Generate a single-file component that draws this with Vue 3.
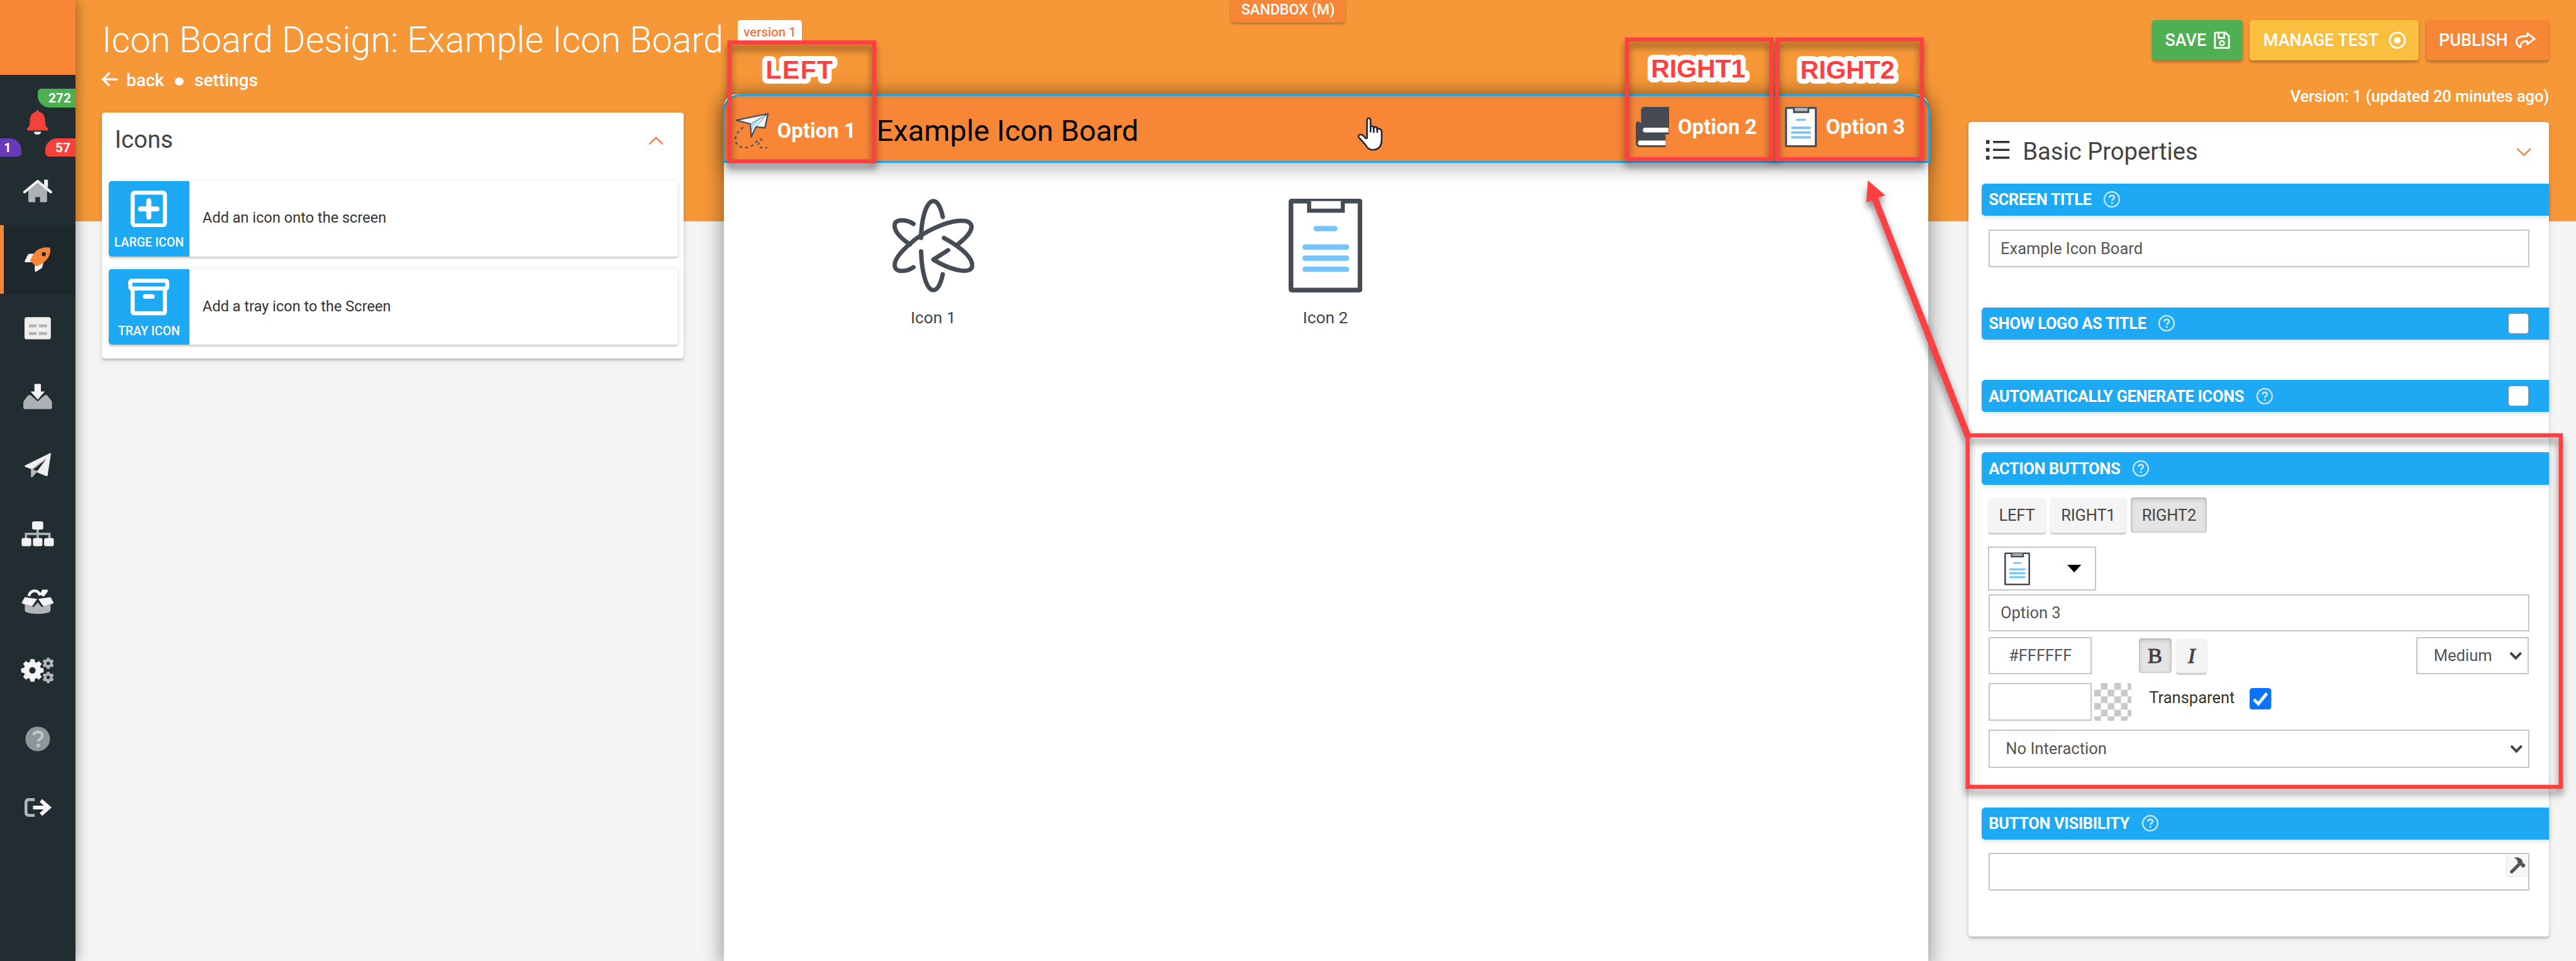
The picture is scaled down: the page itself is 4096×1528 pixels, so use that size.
<script setup>
const gear = (cx, cy, r, teeth, hole) => {
  const pts = []
  const step = (Math.PI * 2) / teeth
  for (let i = 0; i < teeth; i++) {
    const a = i * step - Math.PI / 2
    for (const [k, m] of [[-0.36, 0.76], [-0.2, 1], [0.2, 1], [0.36, 0.76]]) {
      const t = a + k * step
      pts.push(`${(cx + Math.cos(t) * r * m).toFixed(2)} ${(cy + Math.sin(t) * r * m).toFixed(2)}`)
    }
  }
  return `M${pts.join('L')}Z M${cx - hole} ${cy}a${hole} ${hole} 0 1 0 ${hole * 2} 0a${hole} ${hole} 0 1 0 ${-hole * 2} 0Z`
}

const palette = [
  { id: 'large', label: 'LARGE ICON', text: 'Add an icon onto the screen' },
  { id: 'tray', label: 'TRAY ICON', text: 'Add a tray icon to the Screen' },
]
const positions = ['LEFT', 'RIGHT1', 'RIGHT2']
</script>

<template>
  <div class="app">
    <svg class="defs" width="0" height="0">
      <symbol id="clipboard" viewBox="0 0 126 160">
        <rect x="4" y="4" width="118" height="152" rx="1" fill="#fff" stroke="#454c55" stroke-width="8" />
        <path d="M35 4V20.500H92.500V4" fill="var(--clip, #fff)" stroke="#454c55" stroke-width="7" />
        <path d="M47 51H79M28 82.500H99M28 101.500H99M28 120.500H99" stroke="#76c2fc" stroke-width="9" stroke-linecap="round" />
      </symbol>
      <symbol id="help" viewBox="0 0 30 30">
        <circle cx="15" cy="15" r="12.800" fill="none" stroke="#c4e7fd" stroke-width="2.600" />
        <path d="M11 12.200C11.300 9.600 13 8.500 15.200 8.500 17.500 8.500 19.200 9.900 19.200 12 19.200 14.700 15.300 14.600 15.300 17.600" fill="none" stroke="#c4e7fd" stroke-width="2.800" />
        <circle cx="15.300" cy="21.300" r="1.800" fill="#c4e7fd" />
      </symbol>
    </svg>

    <nav class="sidebar">
      <div class="logo"></div>
      <div class="alerts">
        <span class="badge green">272</span>
        <svg class="bell" viewBox="0 0 38 42">
          <path d="M19 0C21 0 21.500 1.500 21.500 3C29 5 32 11 32 18C32 26 34 29 37 31.500C38 33 37 35 35 35H3C1 35 0 33 1 31.500C4 29 6 26 6 18C6 11 9 5 16.500 3C16.500 1.500 17 0 19 0Z" fill="#f5413c" />
          <path d="M13 37H25C25 40 22.500 42 19 42S13 40 13 37Z" fill="#f2f2f2" />
        </svg>
        <span class="badge purple">1</span>
        <span class="badge red">57</span>
      </div>
      <div class="nav-item">
        <svg viewBox="0 0 60 60">
          <path d="M30 16L46 29V47Q46 49 44 49H34V40H26V49H16Q14 49 14 47V29Z" fill="#adb1b3" />
          <path d="M41 10.500H47.500V24L41 19Z" fill="#f4f4f4" />
          <path d="M7.500 31.500L30 13L52.500 31.500" fill="none" stroke="#f8f8f8" stroke-width="4.600" stroke-linecap="round" stroke-linejoin="round" />
        </svg>
      </div>
      <div class="nav-item active">
        <svg viewBox="0 0 60 60">
          <path d="M24 20H16Q14 20 13 22L8 32Q7 34.500 10 34.500H20ZM40 34L38 42Q38 44 36 45L28 50Q25 52 25 48V39Z" fill="#f2f2f2" />
          <path d="M51 9.500C53 17 50 26 43 32.500C38 37 33 39.500 28 41.500L17 32C19 27 22 20 27 15.500C33 10 43 7.500 51 9.500Z" fill="#f78637" />
          <circle cx="40.500" cy="20.500" r="3.600" fill="#1e282c" />
        </svg>
      </div>
      <div class="nav-item">
        <svg viewBox="0 0 60 60">
          <rect x="7.500" y="11" width="45" height="38" rx="4" fill="#efefef" />
          <path d="M15 26H28M32 26H46M15 39H28M32 39H46" stroke="#b3b5b6" stroke-width="5" />
        </svg>
      </div>
      <div class="nav-item">
        <svg viewBox="0 0 60 60">
          <path d="M14 27H18L29 37H31L42 27H46L53 36Q54.500 38 54.500 41V48Q54.500 51 51 51H9Q5.500 51 5.500 48V41Q5.500 38 7 36Z" fill="#adb1b3" />
          <path d="M24.500 8H35.500V21H42L30 35L18 21H24.500Z" fill="#f4f4f4" />
        </svg>
      </div>
      <div class="nav-item">
        <svg viewBox="0 0 60 60">
          <path d="M18.500 36L30 40L21 50Q19 52 18.500 48Z" fill="#b8bbbc" />
          <path d="M51 9Q53 8.500 52.500 11L47 47Q46.500 49 44 48L28 41.500L44 20L21 37L8.500 32.500Q7 31 8.500 30Z" fill="#efefef" />
          <path d="M44 19L21 37" stroke="#a9adaf" stroke-width="1.800" />
        </svg>
      </div>
      <div class="nav-item">
        <svg viewBox="0 0 60 60">
          <path d="M30 22V38M10 38V30H50V38" fill="none" stroke="#b0b3b5" stroke-width="4" />
          <g fill="#f2f2f2">
            <rect x="20.500" y="8.500" width="19" height="14" rx="3" />
            <rect x="2.500" y="37" width="16.500" height="14" rx="3" />
            <rect x="22" y="37" width="16" height="14" rx="3" />
            <rect x="41" y="37" width="16.500" height="14" rx="3" />
          </g>
        </svg>
      </div>
      <div class="nav-item">
        <svg viewBox="0 0 60 60">
          <path d="M8 34L23 39L30 31L37 39L52 34V44Q52 47 49 48C38 51.500 22 51.500 11 48Q8 47 8 44Z" fill="#b3b6b8" />
          <path d="M15 20C17 9 31 8 34 19M38 20L45 11" fill="none" stroke="#f4f4f4" stroke-width="5" />
          <path d="M33 18H43L47 12V9H38" fill="#f4f4f4" />
          <path d="M8 22L29 25L21 37Q20 38 18 37L4 33Q2 32 3 31ZM52 22L31 25L39 37Q40 38 42 37L56 33Q58 32 57 31Z" fill="#f4f4f4" />
        </svg>
      </div>
      <div class="nav-item">
        <svg viewBox="0 0 60 60" fill-rule="evenodd">
          <path :d="gear(21, 30, 19, 8, 6)" fill="#f4f4f4" stroke="#f4f4f4" stroke-width="1" stroke-linejoin="round" />
          <path :d="gear(48, 18, 10, 6, 3)" fill="#b3b6b8" />
          <path :d="gear(48, 42, 10, 6, 3)" fill="#b3b6b8" />
        </svg>
      </div>
      <div class="nav-item">
        <svg viewBox="0 0 60 60">
          <circle cx="30" cy="30" r="21" fill="#8f9698" />
          <path d="M22.500 23.500C24.500 19.500 27 18 30.500 18C35 18 38 20.500 38 24.500C38 30 31 29.500 31 34.500" fill="none" stroke="#c3c6c7" stroke-width="4.600" />
          <circle cx="31" cy="41" r="3" fill="#c3c6c7" />
        </svg>
      </div>
      <div class="nav-item">
        <svg viewBox="0 0 60 60">
          <path d="M25 16.500H15Q10 16.500 10 22V38Q10 43.500 15 43.500H25" fill="none" stroke="#b3b6b8" stroke-width="5" />
          <path d="M22 30H49M35.500 18L49 30L35.500 42" fill="none" stroke="#f6f6f6" stroke-width="6.400" />
        </svg>
      </div>
    </nav>

    <main class="main">
      <section class="col-left">
        <header class="page-head">
          <h1>Icon Board Design: Example Icon Board</h1>
          <span class="version-tag">version 1</span>
        </header>
        <div class="crumbs">
          <svg class="back-arrow" viewBox="0 0 28 26">
            <path d="M27 13H3M13 2L2 13L13 24" fill="none" stroke="#fff" stroke-width="3.600" />
          </svg>
          <a>back</a><i class="dot"></i><a>settings</a>
        </div>
        <div class="card icons-card">
          <div class="card-head">
            <h2>Icons</h2>
            <svg class="chev" viewBox="0 0 26 14"><path d="M1.500 13L13 2L24.500 13" /></svg>
          </div>
          <div v-for="p in palette" :key="p.id" class="pal">
            <div class="pal-tile">
              <svg v-if="p.id === 'large'" class="pal-icon" viewBox="0 0 70 63">
                <rect x="7.500" y="3.500" width="55" height="56" rx="4" fill="none" stroke="#fff" stroke-width="7" />
                <path d="M21 31.500H49M35 17.500V45.500" stroke="#fff" stroke-width="8.500" stroke-linecap="round" />
              </svg>
              <svg v-else class="pal-icon" viewBox="0 0 70 63">
                <path d="M7.500 19V56Q7.500 59 10.500 59H59.500Q62.500 59 62.500 56V19" fill="none" stroke="#fff" stroke-width="7" />
                <rect x="3.500" y="3.500" width="63" height="13.500" rx="2.500" fill="none" stroke="#fff" stroke-width="7" />
                <path d="M29 30.500H41" stroke="#fff" stroke-width="8" stroke-linecap="round" />
              </svg>
              <b>{{ p.label }}</b>
            </div>
            <span class="pal-text">{{ p.text }}</span>
          </div>
        </div>
      </section>

      <section class="canvas">
        <div class="board-bar">
          <svg class="plane" viewBox="0 0 60 62">
            <path d="M57 2L3 13L27 19.500L28.500 42L36.500 24.500L52 26Z" fill="#fdfeff" stroke="#4a515b" stroke-width="2.600" stroke-linejoin="round" />
            <path d="M50 6L28 19.500L30 35L33 23Z" fill="#a6dcfb" />
            <path d="M27 19.500L55 3L36.500 24.500" fill="none" stroke="#4a515b" stroke-width="1" />
            <path d="M15 25C4 33 0 42 2 50C5 61 24 64 34 53C40 46 47 42 46 48C44 52 37 53 41 58C44 61 50 60 56 60" fill="none" stroke="#575657" stroke-width="2.700" stroke-dasharray="5 5" />
          </svg>
          <b class="opt opt1">Option 1</b>
          <span class="board-title">Example Icon Board</span>
          <svg class="books" viewBox="0 0 57 69">
            <path d="M57 0H15Q9 0 9 6V27H7Q6 24 2 25Q0 27 0 31V61Q0 69 8 69H51V47H57Z" fill="#454b55" />
            <path d="M56 35.500H14Q10 39.500 14 43.500H56ZM51 57.500H6Q1 61.500 6 65.500H51Z" fill="#fff" />
          </svg>
          <b class="opt opt2">Option 2</b>
          <svg class="clip-sm"><use href="#clipboard" /></svg>
          <b class="opt opt3">Option 3</b>
        </div>
        <div class="board-body">
          <div class="board-icon">
            <svg class="atom" viewBox="0 0 140 160" fill="none" stroke="#454c55" stroke-width="7.500" stroke-linecap="round" stroke-linejoin="round">
              <path d="M86 31C82 12 76 4 70 4C58 4 49 35 49 67M49 90C50 125 58 156 70 156C76 156 82 148 86 129" />
              <path d="M36 117C24 125 8 126 4.500 117C1 106 15 90 30 77C48 60 95 34 125 38C142 42 138 58 110 79" />
              <path d="M36 43C24 35 8 35 4.500 42C1 54 12 66 30 78M88 67C105 76 140 98 136 117C130 130 95 120 70 104L95 88" />
            </svg>
            <span>Icon 1</span>
          </div>
          <div class="board-icon second">
            <svg class="clip-lg"><use href="#clipboard" /></svg>
            <span>Icon 2</span>
          </div>
        </div>
      </section>

      <section class="col-right">
        <div class="actions">
          <button class="act save">SAVE
            <svg viewBox="0 0 28 30"><path d="M3 2H20L26 8V28H2V3Z M8 3V11H18V3" fill="none" stroke="#fff" stroke-width="3" /><circle cx="14" cy="20" r="3.800" fill="none" stroke="#fff" stroke-width="2.600" /></svg>
          </button>
          <button class="act test">MANAGE TEST
            <svg viewBox="0 0 30 30"><circle cx="15" cy="15" r="13" fill="none" stroke="#fff" stroke-width="3" /><circle cx="15" cy="15" r="5.500" fill="#fff" /></svg>
          </button>
          <button class="act publish">PUBLISH
            <svg viewBox="0 0 36 30"><path d="M21 3L33.500 12.500L21 22V16.500C13 16.500 9 19 9.500 27C5 25 2.500 21 2.500 17C2.500 10.500 9 8 21 8Z" fill="none" stroke="#fff" stroke-width="3" stroke-linejoin="round" /></svg>
          </button>
        </div>
        <div class="version-line">Version: 1 (updated 20 minutes ago)</div>

        <div class="card props">
          <div class="card-head props-head">
            <svg class="list" viewBox="0 0 42 36">
              <path d="M13 4H41M13 17.500H41M13 31H41" stroke="#333" stroke-width="3.800" />
              <path d="M1 4H7M1 17.500H7M1 31H7" stroke="#333" stroke-width="6.400" />
            </svg>
            <h2>Basic Properties</h2>
            <svg class="chev" viewBox="0 0 26 14"><path d="M1.500 1.500L13 12.500L24.500 1.500" /></svg>
          </div>

          <div class="bar"><b>SCREEN TITLE</b><svg class="help"><use href="#help" /></svg></div>
          <div class="field title-field">Example Icon Board</div>

          <div class="bar"><b>SHOW LOGO AS TITLE</b><svg class="help"><use href="#help" /></svg><i class="check"></i></div>
          <div class="bar auto"><b>AUTOMATICALLY GENERATE ICONS</b><svg class="help"><use href="#help" /></svg><i class="check"></i></div>

          <div class="bar auto"><b>ACTION BUTTONS</b><svg class="help"><use href="#help" /></svg></div>
          <div class="tabs">
            <span v-for="p in positions" :key="p" class="tab" :class="{ on: p === 'RIGHT2' }">{{ p }}</span>
          </div>
          <div class="picker">
            <svg class="clip-xs"><use href="#clipboard" /></svg>
            <svg class="caret" viewBox="0 0 24 13"><path d="M0 0H24L12 13Z" /></svg>
          </div>
          <div class="field name-field">Option 3</div>
          <div class="row style-row">
            <div class="field color">#FFFFFF</div>
            <span class="fmt bold on">B</span>
            <span class="fmt ital">I</span>
            <div class="field size">Medium<svg class="drop" viewBox="0 0 22 14"><path d="M2 2L11 11.500L20 2" /></svg></div>
          </div>
          <div class="row bg-row">
            <div class="field color"></div>
            <i class="checker"></i>
            <span class="transparent">Transparent</span>
            <svg class="ticked" viewBox="0 0 37 37"><rect width="37" height="37" rx="5" fill="#0b72fc" /><path d="M7.500 19.500L15 27L29.500 9" fill="none" stroke="#fff" stroke-width="5.200" /></svg>
          </div>
          <div class="field action">No Interaction<svg class="drop" viewBox="0 0 22 14"><path d="M2 2L11 11.500L20 2" /></svg></div>

          <div class="bar vis"><b>BUTTON VISIBILITY</b><svg class="help"><use href="#help" /></svg></div>
          <div class="field expr">
            <span class="hammer"><svg viewBox="0 0 30 30"><path d="M2 25L16 11L20 15L6 29Q2 29 2 25Z" fill="#555" /><path d="M9 2C15 0 20 2 23 6L24 11L28 13V17L24 19L15 10V7Q13 4 9 2Z" fill="#555" /></svg></span>
          </div>
        </div>
      </section>
    </main>

    <div class="sandbox">SANDBOX (M)</div>

    <svg class="marks" viewBox="0 0 4400 1641">
      <g class="boxes">
        <rect x="1246" y="72.500" width="247" height="203" />
        <rect x="2779" y="67.500" width="247" height="204.500" />
        <rect x="3035.500" y="67.500" width="247" height="204.500" />
        <rect x="3361" y="743.500" width="1013" height="600.500" />
        <path class="shaft" d="M3361 744L3202 338" />
        <path class="head" d="M3190.500 308L3188 346L3220 333.500Z" />
      </g>
      <g class="labels">
        <text class="wide" x="1308" y="134">LEFT</text>
        <text x="2820" y="132">RIGHT1</text>
        <text x="3075" y="134">RIGHT2</text>
      </g>
      <path class="hand" d="M2335 236V205Q2335 202 2338 202Q2341 202 2341 206V218Q2342 214 2346 216V220Q2348 215 2352 218V222Q2354 218 2358 221Q2360 222 2360 226V238Q2360 256 2344 256Q2337 256 2332 247L2320.500 234Q2320 229 2325 230Q2329 231 2332 236ZM2341 217V226M2346.500 218V227M2352.500 220V227" />
    </svg>
  </div>
</template>

<style>
html, body { margin: 0; overflow: hidden; background: #f4f4f4; }
</style>

<style scoped>
.app {
  position: relative;
  zoom: 0.930909;
  width: 4400px;
  height: 1642px;
  display: flex;
  overflow: hidden;
  font-family: Roboto, "Liberation Sans", sans-serif;
  color: #444;
  background: linear-gradient(#f79838 378px, #f4f4f4 378px);
}
.app * { box-sizing: border-box; }
.defs { position: absolute; }
h1, h2 { margin: 0; font-weight: 400; }

.sidebar { width: 128.500px; flex: none; background: #222d32; box-shadow: 0 0 22px rgba(0, 0, 0, .42); z-index: 2; }
.logo { height: 128px; background: #f78637; }
.alerts { position: relative; height: 140px; }
.bell { position: absolute; left: 45.500px; top: 60px; width: 38px; height: 42px; }
.badge { position: absolute; height: 32px; display: flex; align-items: center; justify-content: center; color: #fff; font-weight: 700; font-size: 22.500px; }
.green { top: 24px; right: 0; width: 64px; padding-left: 11px; background: #4caf50; border-radius: 6px 0 0 20px; }
.purple { bottom: 0; left: 0; width: 37px; padding-right: 11px; background: #673ab7; border-radius: 0 20px 6px 0; }
.red { bottom: 0; right: 0; width: 51px; padding-left: 9px; background: #f5413c; border-radius: 20px 0 0 6px; }
.nav-item { height: 117px; display: flex; align-items: center; justify-content: center; }
.nav-item svg { width: 60px; height: 60px; }
.active { background: #1e282c; border-left: 7px solid #f78637; padding-right: 7px; }

.main { flex: 1; display: flex; align-items: flex-start; }
.col-left { width: 994px; margin-left: 45.500px; flex: none; }
.page-head { height: 104px; padding-top: 34px; display: flex; align-items: flex-start; white-space: nowrap; }
h1 { font-size: 61.800px; font-weight: 300; line-height: 66px; color: #fff; width: 1086px; flex: none; margin-top: 1px; }
.version-tag { flex: none; width: 110px; height: 40px; line-height: 41px; text-align: center; background: #fff; border-radius: 5px; font-size: 22px; font-weight: 500; color: #f27440; }
.crumbs { height: 88px; padding-top: 16px; display: flex; align-items: flex-start; line-height: 34px; font-size: 30px; font-weight: 500; color: #fff; }
.back-arrow { width: 28px; height: 26px; margin: 2px 14px 0 0; }
.dot { width: 15px; height: 14px; border-radius: 50%; background: #fff; margin: 12px 19px 0 18px; }
.card { background: #fff; border-radius: 5px; box-shadow: 0 3px 3px rgba(0, 0, 0, .14), 0 3px 10px rgba(0, 0, 0, .12); }
.icons-card { height: 420px; padding: 0 10px 0 12px; }
.card-head { height: 117px; display: flex; align-items: flex-start; padding: 22px 25px 0 10px; }
.card-head h2 { font-size: 41px; line-height: 50px; color: #444; flex: 1; }
.chev { width: 26px; height: 14px; margin-top: 19px; fill: none; stroke: #f5814a; stroke-width: 2.800; }
.pal { height: 129px; margin-bottom: 22px; display: flex; background: #fff; border-radius: 5px; box-shadow: 0 3px 3px rgba(0, 0, 0, .15), 0 0 8px rgba(0, 0, 0, .1); }
.pal-tile { width: 137px; background: #1da9f3; border-radius: 5px 0 0 5px; display: flex; flex-direction: column; align-items: center; padding-top: 16px; }
.pal-icon { width: 70px; height: 63px; }
.pal-tile b { color: #fff; font-size: 21px; line-height: 24px; font-weight: 500; margin-top: 15px; white-space: nowrap; }
.pal-text { font-size: 25.300px; margin: 47px 0 0 23px; line-height: 34px; color: #333; }

.canvas { width: 2057px; flex: none; margin: 161px 0 0 69px; height: 1490px; background: #fff; border-radius: 20px 20px 0 0; box-shadow: 0 4px 38px rgba(0, 0, 0, .45); }
.board-bar { margin: 0 -3px; height: 117px; display: flex; align-items: flex-start; background: #f78637; border: 4px solid #1da6ea; border-radius: 30px 30px 0 0; padding: 0 39px 0 18px; box-shadow: 0 10px 30px rgba(0, 0, 0, .26); }
.plane { width: 60px; height: 62px; margin-top: 28px; }
.opt { color: #fff; font-size: 35.500px; line-height: 40px; font-weight: 700; white-space: nowrap; }
.opt1 { margin: 39px 0 0 12px; width: 170px; }
.board-title { flex: 1; color: #000; font-size: 50.500px; line-height: 60px; margin-top: 29px; }
.books { width: 57px; height: 69px; margin-top: 18px; }
.opt2 { margin: 32px 0 0 15px; width: 183px; }
.clip-sm { --clip: #b4b6b9; width: 55px; height: 69px; margin-top: 18px; }
.opt3 { margin: 32px 0 0 15px; width: 136px; }
.board-body { display: flex; padding: 61px 0 0 256px; }
.board-icon { width: 202px; display: flex; flex-direction: column; align-items: center; font-size: 28.300px; color: #444; }
.board-icon span { margin-top: 27px; line-height: 34px; }
.second { margin-left: 468px; }
.atom { width: 140px; height: 160px; }
.clip-lg { width: 126px; height: 160px; }

.col-right { width: 992px; flex: none; margin-left: 68px; padding-top: 34px; }
.actions { display: flex; justify-content: flex-end; gap: 12px; }
.act { height: 69px; border: 0; border-radius: 5px; display: flex; align-items: center; justify-content: space-between; padding: 0 22px; font: 500 29px Roboto, sans-serif; color: #fff; box-shadow: 0 3px 5px rgba(0, 0, 0, .28); white-space: nowrap; }
.act svg { height: 30px; flex: none; }
.save { width: 155px; background: #4eb053; }
.test { width: 289px; background: #fabf3e; padding-left: 23px; }
.publish { width: 210px; background: #f78637; }
.version-line { height: 105px; padding-top: 45px; line-height: 34px; text-align: right; font-size: 27.400px; font-weight: 500; color: #fff; letter-spacing: -.1px; }
.props { height: 1392px; }
.props-head { height: 105.500px; padding: 26px 30px 0 29px; }
.props-head .chev { margin-top: 18px; }
.list { width: 42px; height: 36px; margin: 5px 22px 0 0; }
.bar { height: 55px; margin-left: 23px; padding: 0 34px 0 12px; display: flex; align-items: center; background: #1da9f3; border-radius: 6px 0 0 6px; box-shadow: 0 3px 8px rgba(0, 0, 0, .12); color: #fff; }
.bar b { font-size: 27.400px; letter-spacing: -.4px; white-space: nowrap; }
.bar.auto { margin-top: 69px; }
.help { width: 30px; height: 30px; margin-left: 20px; }
.check { width: 36px; height: 36px; margin-left: auto; background: #fff; border: 2px solid #7c8a93; border-radius: 5px; }
.field { width: 924px; height: 64px; margin-left: 35px; border: 2.500px solid #c6c6c6; padding: 0 18px; display: flex; align-items: center; font-size: 27.400px; color: #555; background: #fff; }
.title-field { margin-top: 24px; margin-bottom: 68.500px; }
.tabs { display: flex; gap: 8px; margin: 22px 0 0 34px; }
.tab { width: 130px; height: 60px; border-radius: 5px; background: #f4f4f4; justify-content: center; font-size: 27.400px; display: flex; align-items: center; letter-spacing: -.2px; color: #444; box-shadow: 0 3px 2px rgba(0, 0, 0, .2); }
.tab:first-child { width: 98px; }
.tab.on, .fmt.on { background: #e4e4e4; box-shadow: inset 0 3px 8px rgba(0, 0, 0, .18), inset 0 0 0 2px #d4d4d4; }
.picker { width: 184px; height: 75px; margin: 24px 0 0 34px; border: 2.500px solid #c6c6c6; display: flex; align-items: flex-start; padding: 7px 0 0 25px; }
.clip-xs { --clip: #a5a9ad; width: 44px; height: 57px; }
.caret { width: 24px; height: 13px; margin: 22px 0 0 64px; }
.name-field { margin-top: 6px; }
.row { display: flex; align-items: flex-start; }
.style-row { margin-top: 9px; }
.color { width: 176px; justify-content: center; }
.fmt { height: 59px; margin-top: 3px; border-radius: 5px; display: flex; align-items: center; justify-content: center; font-family: "Liberation Serif", serif; font-size: 37px; color: #444; background: #f4f4f4; box-shadow: 0 3px 2px rgba(0, 0, 0, .2); -webkit-text-stroke: 1.200px #444; }
.fmt.bold { width: 56px; margin-left: 80px; }
.fmt.ital { width: 53px; margin-left: 8px; font-style: italic; }
.size { width: 193px; margin-left: 357px; padding: 0 10px 0 28px; justify-content: space-between; }
.drop { width: 22px; height: 14px; fill: none; stroke: #444; stroke-width: 4.200; }
.bg-row { margin-top: 15px; }
.checker { width: 64px; height: 64px; margin-left: 4px; border-radius: 4px; background: repeating-conic-gradient(#c9c9c9 0 25%, #fff 0 50%) 0 0 / 22.800px 22.800px; }
.transparent { font-size: 27.400px; line-height: 34px; margin: 8px 0 0 30px; color: #333; width: 172px; }
.ticked { width: 37px; height: 37px; margin-top: 8px; }
.action { margin-top: 15.500px; height: 65px; padding: 0 10px 0 27px; justify-content: space-between; }
.vis { margin-top: 67.500px; }
.expr { margin-top: 23px; padding: 0; align-items: flex-start; justify-content: flex-end; }
.hammer { width: 38px; height: 39px; background: #f7f7f7; border: solid #e4e4e4; border-width: 0 0 2px 2px; padding: 4px 0 0 3px; }
.hammer svg { width: 30px; height: 30px; display: block; }

.sandbox { position: absolute; z-index: 3; left: 2102px; top: 0; width: 196px; height: 39px; line-height: 33px; text-align: center; background: #f78637; border-radius: 0 0 6px 6px; color: #fff; font-size: 25px; font-weight: 500; box-shadow: 0 2px 4px rgba(0, 0, 0, .3); }
.marks { position: absolute; z-index: 4; left: 0; top: 0; width: 4400px; height: 1641px; }
.boxes { fill: none; stroke: #ff4042; stroke-width: 7; filter: drop-shadow(0 9px 6px rgba(0, 0, 0, .48)); }
.shaft { stroke-width: 11; stroke-linecap: round; }
.head { fill: #ff4042; stroke: none; }
.labels { font: 700 44px "Liberation Sans", Arial, sans-serif; fill: #ff4042; stroke: #fff; stroke-width: 17px; stroke-linejoin: round; paint-order: stroke; }
.wide { letter-spacing: 1.500px; }
.hand { fill: #fff; stroke: #222a38; stroke-width: 2.800; stroke-linejoin: round; }
</style>
